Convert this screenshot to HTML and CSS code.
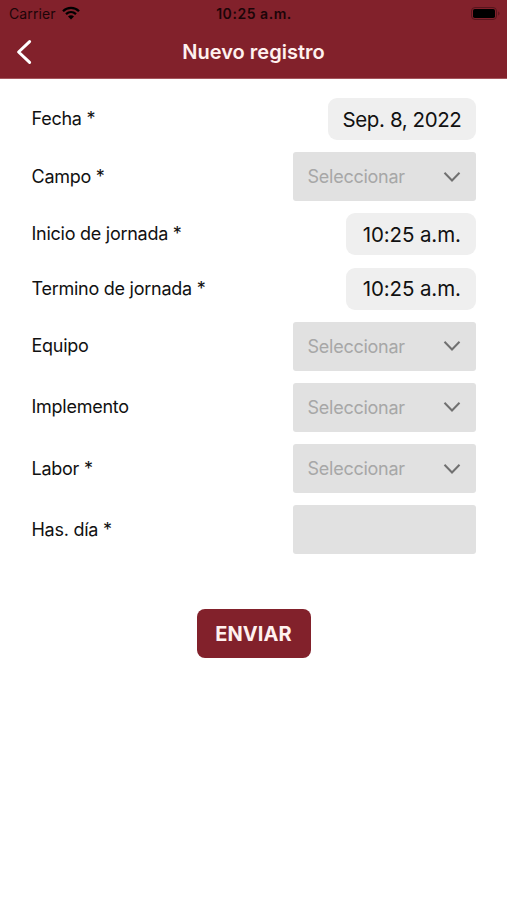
FILE: index.html
```html
<!DOCTYPE html>
<html lang="es">
<head>
<meta charset="utf-8">
<title>Nuevo registro</title>
<link rel="stylesheet" href="styles.css">
</head>
<body>
<header class="header">
  <div class="status">
    <div class="carrier"><span>Carrier</span>
      <svg class="wifi" width="18" height="14" viewBox="0 0 18 14"><g fill="none" stroke="#000" stroke-width="2.3"><path d="M1 5.2C5.4.8 12.6.8 17 5.2"/><path d="M4 8.2c2.9-2.7 7.1-2.7 10 0"/></g><path d="M6 10.4c1.7-1.5 4.3-1.5 6 0l-3 3z"/></svg>
    </div>
    <div class="clock">10:25 a.m.</div>
    <svg class="battery" width="30" height="13" viewBox="0 0 30 13"><rect x=".5" y=".5" width="25" height="12" rx="3.5" fill="none" stroke="#57151d"/><rect x="2" y="2" width="22" height="9" rx="1.8"/><path d="M27.2 4.5c1.7.5 1.7 3.5 0 4z" fill="#57151d"/></svg>
  </div>
  <div class="nav">
    <svg class="back" width="16" height="26" viewBox="0 0 16 26"><path d="M13.6 2.6 2.6 13l11 10.4" fill="none" stroke="#fff" stroke-width="3" stroke-linecap="round" stroke-linejoin="round"/></svg>
    <h1 class="title">Nuevo registro</h1>
  </div>
</header>
<main class="form">
  <div class="row"><span class="label">Fecha *</span><div class="pill date">Sep. 8, 2022</div></div>
  <div class="row"><span class="label">Campo *</span><div class="field"><span>Seleccionar</span><svg class="chevron" width="18" height="12" viewBox="0 0 18 12"><path d="m1.5 1.8 7.5 7.7 7.5-7.7"/></svg></div></div>
  <div class="row"><span class="label">Inicio de jornada *</span><div class="pill time">10:25 a.m.</div></div>
  <div class="row"><span class="label">Termino de jornada *</span><div class="pill time">10:25 a.m.</div></div>
  <div class="row"><span class="label">Equipo</span><div class="field"><span>Seleccionar</span><svg class="chevron" width="18" height="12" viewBox="0 0 18 12"><path d="m1.5 1.8 7.5 7.7 7.5-7.7"/></svg></div></div>
  <div class="row"><span class="label">Implemento</span><div class="field"><span>Seleccionar</span><svg class="chevron" width="18" height="12" viewBox="0 0 18 12"><path d="m1.5 1.8 7.5 7.7 7.5-7.7"/></svg></div></div>
  <div class="row"><span class="label">Labor *</span><div class="field"><span>Seleccionar</span><svg class="chevron" width="18" height="12" viewBox="0 0 18 12"><path d="m1.5 1.8 7.5 7.7 7.5-7.7"/></svg></div></div>
  <div class="row"><span class="label">Has. día *</span><div class="field"></div></div>
  <button class="submit">ENVIAR</button>
</main>
</body>
</html>
```
FILE: styles.css
```css
* { box-sizing: border-box; }
body { margin: 0; min-height: 900px; background: #fff; color: #111; font-family: Inter, "Liberation Sans", sans-serif; }
svg { display: block; flex: none; }
.header { height: 79px; background: #82212b; border-bottom: 1px solid #a4565d; }
.status { display: grid; grid-template-columns: 1fr auto 1fr; align-items: center; height: 27px; padding: 0 6px 0 9px; color: #1c0508; font-size: 14px; }
.carrier { display: flex; align-items: center; gap: 6px; letter-spacing: 0.1px; }
.wifi { margin-top: -2px; }
.clock { margin-left: -2px; font-weight: 600; letter-spacing: 0.55px; }
.battery { justify-self: end; }
.nav { display: grid; grid-template-columns: 1fr auto 1fr; align-items: center; height: 50px; padding: 0 16px; }
.title { margin: 0; color: #fff1ef; font-size: 20px; font-weight: 600; line-height: 24px; letter-spacing: 0; }
.form { display: flex; flex-direction: column; gap: 12.3px; padding: 19px 31px 0; }
.row { display: flex; align-items: center; justify-content: space-between; }
.label { padding-left: 0.5px; font-size: 18px; line-height: 24px; letter-spacing: -0.26px; }
.pill { display: flex; align-items: center; justify-content: center; height: 42px; border-radius: 9px; background: #efefef; font-size: 20.5px; }
.date { width: 148px; letter-spacing: -0.4px; }
.time { width: 130.5px; padding-left: 2px; letter-spacing: -0.1px; }
.field { display: flex; align-items: center; justify-content: space-between; width: 183.5px; height: 48.8px; padding: 0 15px; border-radius: 3px; background: #e1e1e1; color: #a7a7a7; font-size: 18px; letter-spacing: -0.25px; }
.chevron path { fill: none; stroke: #707070; stroke-width: 2; }
.submit { align-self: center; width: 114px; height: 49px; margin-top: 42.5px; padding: 2px 0 0; border: 0; border-radius: 8px; background: #82212b; color: #fff1ef; font: 700 20px Inter, "Liberation Sans", sans-serif; letter-spacing: 0.1px; }
```
